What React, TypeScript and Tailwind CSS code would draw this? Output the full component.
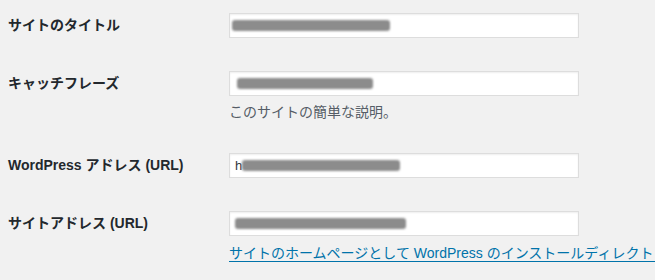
export default function App() {
  return (
    <div
      className="w-[655px] h-[280px] overflow-hidden bg-[#f1f1f1] pt-[13px] text-[#23282d]"
      style={{ fontFamily: '"Liberation Sans", "Noto Sans CJK JP", sans-serif' }}
    >
      <Row label="サイトのタイトル">
        <Field>
          <Smudge className="ml-[2px] w-[158px]" />
        </Field>
      </Row>

      <Row label="キャッチフレーズ" mb="mb-0">
        <Field>
          <Smudge className="ml-[7px] w-[136px]" />
        </Field>
      </Row>
      <div className="pl-[229px] mb-[31px]">
        <p className="mt-[6px] text-[14px] leading-[20px] text-[#555d66]">
          このサイトの簡単な説明。
        </p>
      </div>

      <Row label="WordPress アドレス (URL)">
        <Field>
          <span className="ml-[5px] text-[13px] leading-none text-[#32373c]">h</span>
          <Smudge className="w-[158px]" />
        </Field>
      </Row>

      <Row label="サイトアドレス (URL)" mb="mb-0">
        <Field>
          <Smudge className="ml-[5px] w-[171px]" />
        </Field>
      </Row>
      <div className="pl-[229px] whitespace-nowrap">
        <a
          href="#"
          className="mt-[7px] block text-[14px] leading-[20px] text-[#0073aa] underline underline-offset-[3px]"
        >
          サイトのホームページとして WordPress のインストールディレクトリとは異なる場所を使用する場合は、ここにアドレスを入力してください。
        </a>
      </div>
    </div>
  );
}

function Row({
  label,
  children,
  mb = "mb-[33px]",
}: {
  label: string;
  children: React.ReactNode;
  mb?: string;
}) {
  return (
    <div className={`flex items-center ${mb}`}>
      <label className="w-[229px] shrink-0 pl-[8px] text-[14px] font-bold">{label}</label>
      {children}
    </div>
  );
}

function Field({ children }: { children: React.ReactNode }) {
  return (
    <div className="flex h-[25px] w-[350px] items-center border border-[#dddddd] bg-white shadow-[inset_0_1px_2px_rgba(0,0,0,0.07)]">
      {children}
    </div>
  );
}

function Smudge({ className = "" }: { className?: string }) {
  return (
    <div className={`h-[11px] rounded-[3px] bg-[#8c8c8c] blur-[1.2px] ${className}`} />
  );
}
